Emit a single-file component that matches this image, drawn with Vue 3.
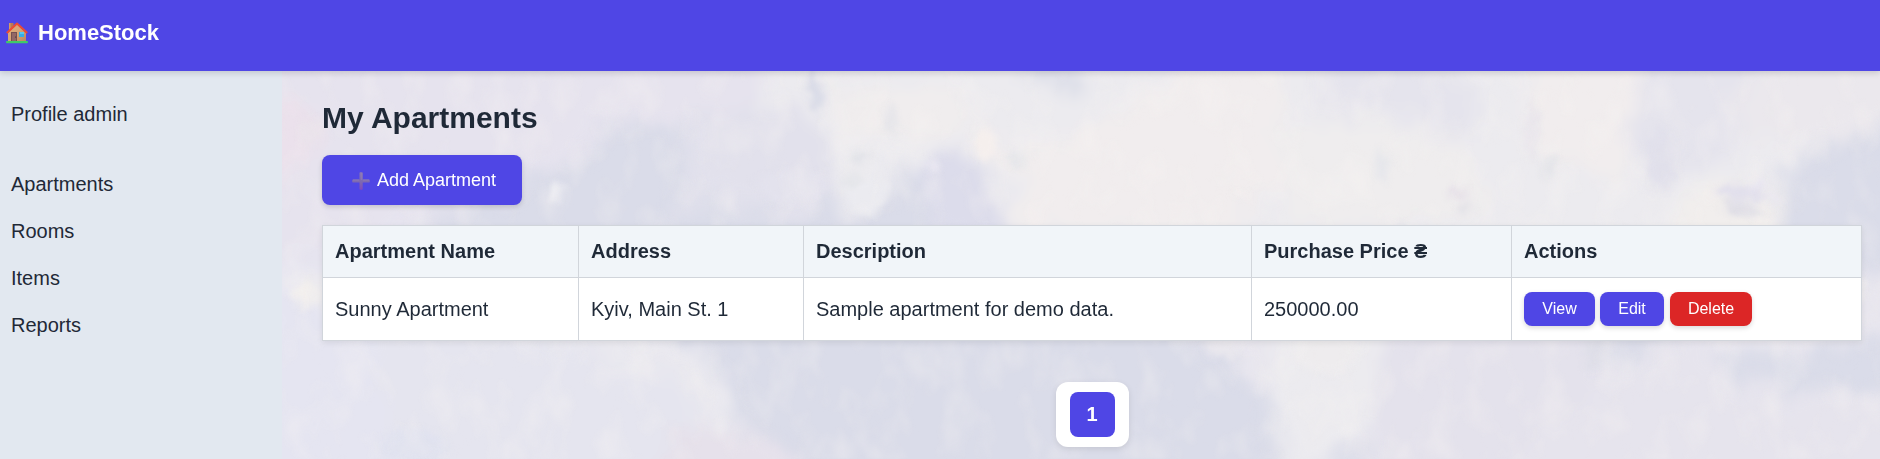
<script setup>
const links = ['Apartments', 'Rooms', 'Items', 'Reports']
const columns = ['Apartment Name', 'Address', 'Description', 'Purchase Price ₴', 'Actions']
const rows = [['Sunny Apartment', 'Kyiv, Main St. 1', 'Sample apartment for demo data.', '250000.00']]
const actions = [
  { label: 'View', kind: 'view' },
  { label: 'Edit', kind: 'edit' },
  { label: 'Delete', kind: 'delete' },
]
const clouds = [
  { c: '#e6e3ee', d: 'M-30 -30H530L525 30L490 60L470 110L430 120L400 60L370 50L320 55L300 90L250 105L200 130L120 155L0 190H-30Z' },
  { c: '#e6e4ef', d: 'M-30 190L70 165L150 130L90 200L50 420H-30Z' },
  { c: '#ebe1ec', d: 'M-30 20L22 32L45 62L28 90L-30 130Z' },
  { c: '#e5e5f1', d: 'M-30 185L70 210L90 285L180 320L220 420H-30Z' },
  { c: '#e2e1ec', d: 'M405 45L525 10L555 75L560 110L520 150L430 130L390 150L410 70Z' },
  { c: '#ecebef', d: 'M480 -30H1640V40L1560 65L1510 95L1490 110L1512 190H710L700 145L692 120L640 105L610 90L600 130L565 150L545 75L520 40L480 35Z' },
  { c: '#f0edee', d: 'M545 8L600 20L670 10L700 42L650 66L605 60L560 75Z' },
  { c: '#f1edee', d: 'M690 45L720 75L790 70L840 35L940 -20H995L1010 110L930 160H720L745 105L695 82Z' },
  { c: '#efedee', d: 'M985 50L1080 55L1180 45L1210 150H1010Z' },
  { c: '#e5e4ed', d: 'M1030 -30H1145L1190 20L1195 75L1150 60L1125 40L1035 45Z' },
  { c: '#f1edee', d: 'M1245 -30H1380L1360 40L1340 110L1290 95L1255 70Z' },
  { c: '#e5e4ed', d: 'M1375 -30H1500L1480 40L1450 90L1370 110L1345 65Z' },
  { c: '#ebe8ed', d: 'M1490 -20L1640 -20V45L1530 75L1470 70L1450 40Z' },
  { c: '#f1eeed', d: 'M1400 125L1450 110L1498 120L1512 190H1390Z' },
  { c: '#dcdceb', d: 'M635 100L675 75L710 110L722 180L660 170Z' },
  { c: '#dddfe9', d: 'M745 -10H790L810 14L780 22L750 12Z' },
  { c: '#eae9ef', d: 'M0 205L80 212L220 205L340 225L360 265L430 280L465 365L460 420H380L360 320L280 270L170 265L120 235L60 245Z' },
  { c: '#e5e5ef', d: 'M80 240L180 260L320 280L400 310L460 420H120Z' },
  { c: '#efedef', d: 'M0 216L120 214L75 225L45 240L20 225Z' },
  { c: '#e8e6ee', d: 'M830 200H1640V265L1560 270L1500 285L1420 280L1370 255L1320 260L1280 235L1130 230L1120 285L1080 320L990 330L960 300L915 260L880 245Z' },
  { c: '#ecebef', d: 'M990 230L1110 225L1125 290L1070 380L1010 420L985 330Z' },
  { c: '#e4e2ec', d: 'M1110 230H1350L1320 290L1360 360L1300 420H1070Z' },
  { c: '#e6e4ed', d: 'M1360 280L1420 265L1450 310L1640 330V420H1190Z' },
  { c: '#e6e1eb', d: 'M390 350L480 365L540 420H380Z' },
]
const dabs = [
  [275, 122, 10, 5, '#efeff4', -35], [650, 94, 7, 6, '#eae8f2', 0], [703, 72, 12, 17, '#f5efed', 0],
  [532, 20, 7, 24, '#d9dbe7', -10], [577, 86, 9, 7, '#e2e3e8', -20], [570, 111, 7, 9, '#e2e4e8', 0], [735, 88, 13, 9, '#e5e6ea', 0],
  [610, 50, 5, 16, '#e4e4e9', -15], [585, 125, 20, 18, '#ebebf0', 0],
  [1268, 96, 8, 10, '#e2e3e8', 0], [1183, 138, 7, 6, '#e2e1e7', 0], [1175, 122, 9, 6, '#e6e0e8', 0],
  [1122, 168, 5, 18, '#e1e0e8', -20], [1335, 165, 9, 9, '#e2e1e8', 0], [1460, 138, 22, 6, '#dddce5', 5],
  [1460, 122, 26, 8, '#e1dfec', 5], [1475, 113, 7, 6, '#e9e6f2', 0], [1492, 128, 5, 8, '#ebe8f1', -20],
  [1100, 95, 6, 14, '#e5e6eb', 0], [1250, 60, 5, 30, '#e8e4eb', 0], [1380, 90, 16, 30, '#e1e0eb', 0],
  [24, 223, 11, 12, '#f2efed', 0], [178, 222, 13, 10, '#f2efed', 0], [395, 245, 14, 8, '#eeecef', 30],
  [850, 222, 7, 14, '#f3f0ef', -25], [1572, 220, 12, 10, '#eeecee', 0], [475, 240, 4, 10, '#edecf1', 0],
  [940, 275, 18, 12, '#e9e7ed', 30], [1045, 275, 32, 28, '#eeecee', 0], [1315, 275, 12, 25, '#dedee8', 15],
  [510, 115, 35, 16, '#e3e2ed', 0], [130, 375, 34, 16, '#e0e2ef', 0], [30, 60, 14, 12, '#eae3eb', 0], [960, 125, 5, 4, '#f5eeee', 0],
]
</script>

<template>
  <div class="page">
    <header class="topbar">
      <svg class="house" viewBox="0 0 22 22" aria-hidden="true">
        <defs>
          <linearGradient id="wall" x2="1" y2="1"><stop stop-color="#e0b17b" /><stop offset=".5" stop-color="#d6a375" /><stop offset="1" stop-color="#b98560" /></linearGradient>
        </defs>
        <path fill="#b97952" d="M3 1h4.5v9H3z" />
        <path fill="#d49a68" d="M3 1h1.5v9H3z" />
        <path fill="url(#wall)" d="M11 2.5 20 11v9H2v-9z" />
        <path fill="none" stroke="#ee4b32" stroke-width="2" stroke-linejoin="round" d="m.8 11 10.2-9.4L21.2 11" />
        <path fill="#765052" d="M5 10h6v10H5z" />
        <path fill="#936765" d="M6 11h4v8H6z" />
        <circle cx="9.6" cy="15" r=".6" fill="#3f2b35" />
        <path fill="#35aee9" d="M13 10h5v5h-5z" />
        <path fill="#54c8f2" d="M14 10h4v2h-4z" />
        <rect y="19" width="22" height="2.2" rx="1" fill="#3fc968" />
      </svg>
      <span class="brand">HomeStock</span>
    </header>
    <div class="body">
      <aside class="sidebar">
        <a class="profile">Profile admin</a>
        <a v-for="link in links" :key="link" class="link">{{ link }}</a>
      </aside>
      <main class="content">
        <svg class="sky" viewBox="0 0 1598 388" preserveAspectRatio="none" aria-hidden="true">
          <defs>
            <filter id="soft" filterUnits="userSpaceOnUse" x="-40" y="-40" width="1680" height="470" color-interpolation-filters="sRGB">
              <feGaussianBlur stdDeviation="9" result="b" />
              <feTurbulence type="fractalNoise" baseFrequency=".028 .022" numOctaves="3" seed="8" />
              <feDisplacementMap in="b" scale="36" xChannelSelector="R" yChannelSelector="G" />
              <feGaussianBlur stdDeviation="2.5" />
            </filter>
            <filter id="dab" filterUnits="userSpaceOnUse" x="-40" y="-40" width="1680" height="470" color-interpolation-filters="sRGB">
              <feGaussianBlur stdDeviation="3.5" result="b" />
              <feTurbulence type="fractalNoise" baseFrequency=".06" numOctaves="2" seed="3" />
              <feDisplacementMap in="b" scale="16" xChannelSelector="R" yChannelSelector="G" />
              <feGaussianBlur stdDeviation="1.5" />
            </filter>
            <filter id="mottle" filterUnits="userSpaceOnUse" x="0" y="0" width="1598" height="388" color-interpolation-filters="sRGB">
              <feTurbulence type="fractalNoise" baseFrequency=".035 .022" numOctaves="3" seed="21" />
              <feColorMatrix values="0 0 0 0 .98  0 0 0 0 .965  0 0 0 0 .955  2.4 0 0 0 -1.05" />
              <feGaussianBlur stdDeviation="1.6" />
            </filter>
          </defs>
          <rect width="1598" height="388" fill="#dadce9" />
          <g filter="url(#soft)">
            <path v-for="(p, i) in clouds" :key="i" :d="p.d" :fill="p.c" />
          </g>
          <g filter="url(#dab)">
            <ellipse v-for="(e, i) in dabs" :key="i" :cx="e[0]" :cy="e[1]" :rx="e[2]" :ry="e[3]" :fill="e[4]" :transform="`rotate(${e[5]} ${e[0]} ${e[1]})`" />
          </g>
          <rect width="1598" height="388" filter="url(#mottle)" opacity=".28" />
        </svg>
        <h2 class="title">My Apartments</h2>
        <button class="add">
          <svg class="plus" viewBox="0 0 18 18" aria-hidden="true">
            <defs>
              <linearGradient id="plusFill" x2="0" y2="1"><stop stop-color="#8c78b4" /><stop offset=".55" stop-color="#7d69b0" /><stop offset="1" stop-color="#8148bd" /></linearGradient>
            </defs>
            <path fill="url(#plusFill)" d="M7.5 1q0-.8.8-.8h1.6q.8 0 .8.8v6.5h6.4q.7 0 .7.8v1.4q0 .8-.7.8h-6.4V17q0 .8-.8.8H8.300q-.8 0-.8-.8v-6.500H1q-.8 0-.8-.8V8.300q0-.8.8-.8h6.500z" />
            <path stroke="#9582b5" stroke-width=".7" d="M9.800 1v7M1 8h6M11 8h6" />
          </svg>
          <span>Add Apartment</span>
        </button>
        <table class="table">
          <colgroup><col class="c1"><col class="c2"><col class="c3"><col class="c4"><col class="c5"></colgroup>
          <thead>
            <tr><th v-for="c in columns" :key="c">{{ c }}</th></tr>
          </thead>
          <tbody>
            <tr v-for="row in rows" :key="row[0]">
              <td v-for="cell in row" :key="cell">{{ cell }}</td>
              <td>
                <div class="actions">
                  <button v-for="a in actions" :key="a.kind" class="btn" :class="a.kind">{{ a.label }}</button>
                </div>
              </td>
            </tr>
          </tbody>
        </table>
        <nav class="pager"><span class="current">1</span></nav>
      </main>
    </div>
  </div>
</template>

<style>
body { margin: 0; overflow: hidden; }
</style>

<style scoped>
.page { height: 459px; display: flex; flex-direction: column; overflow: hidden; font: 20px/23px "Liberation Sans", Arial, sans-serif; color: #1f2937; }
.topbar { box-sizing: border-box; flex: none; height: 71px; padding: 20px 6px 0; display: flex; align-items: flex-start; background: #4f46e5; box-shadow: 0 2px 6px rgba(0, 0, 0, .15); position: relative; z-index: 2; }
.house { width: 22px; height: 22px; margin-top: 2px; }
.brand { margin-left: 10px; font-size: 22px; line-height: 25px; font-weight: 700; color: #fff; }
.body { flex: 1; display: flex; min-height: 0; }
.sidebar { flex: none; box-sizing: border-box; width: 282px; padding: 32px 11px 0; background: #e2e8f0; display: flex; flex-direction: column; gap: 24px; }
.profile { margin-bottom: 23px; }
.content { flex: 1; box-sizing: border-box; position: relative; isolation: isolate; padding: 29px 18px 0 40px; display: flex; flex-direction: column; align-items: flex-start; }
.sky { position: absolute; inset: 0; width: 100%; height: 100%; z-index: -1; }
.title { margin: 0 0 20px; font-size: 30px; line-height: 35px; font-weight: 700; }
button { border: 0; font-family: inherit; color: #fff; background: #4f46e5; box-shadow: 0 2px 5px rgba(0, 0, 0, .15); }
.add { box-sizing: border-box; flex: none; width: 200px; height: 50px; border-radius: 8px; padding: 1px 0 0 30px; display: flex; align-items: center; font-size: 18px; line-height: 21px; white-space: nowrap; }
.plus { width: 18px; height: 18px; margin-right: 7px; flex: none; }
.table { flex: none; width: 1540px; margin-top: 20px; table-layout: fixed; border-collapse: collapse; background: #fff; box-shadow: 0 2px 6px rgba(0, 0, 0, .08); }
.c1 { width: 256px; }
.c2 { width: 225px; }
.c3 { width: 448px; }
.c4 { width: 260px; }
.c5 { width: 350px; }
th, td { box-sizing: border-box; padding: 0 12px; border: 1px solid #d1d5db; text-align: left; }
th { height: 52px; background: #f1f5f9; font-weight: 700; }
td { height: 63px; }
.actions { display: flex; }
.btn { height: 34px; padding: 0 0 1px; border-radius: 8px; font-size: 16px; line-height: 18px; }
.view { width: 71px; margin-right: 5px; }
.edit { width: 64px; margin-right: 6px; }
.delete { width: 82px; background: #dc2626; }
.pager { box-sizing: border-box; flex: none; align-self: center; margin-top: 41px; width: 73px; height: 65px; border-radius: 12px; background: #fff; box-shadow: 0 2px 6px rgba(0, 0, 0, .1); display: flex; align-items: center; justify-content: center; }
.current { width: 45px; height: 45px; border-radius: 8px; background: #4f46e5; color: #fff; font-weight: 700; line-height: 45px; text-align: center; }
</style>
